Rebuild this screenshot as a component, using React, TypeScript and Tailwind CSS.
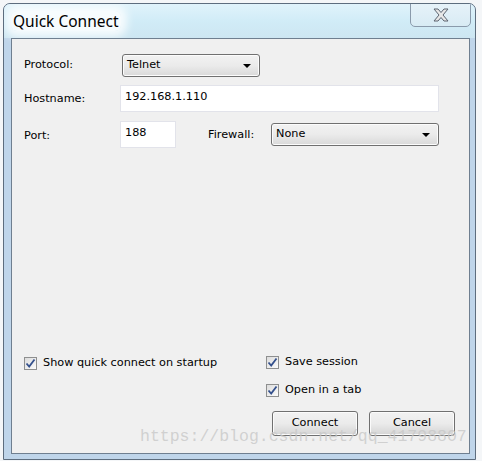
import type { ReactNode } from 'react'

const ui = "font-['DejaVu_Sans',sans-serif] text-[11.25px] text-black"

function Check({ children }: { children: ReactNode }) {
  return (
    <label className="flex items-center gap-[6px]">
      <span className="w-[13px] h-[13px] border border-[#8e8f8f] bg-gradient-to-br from-[#dcdcdc] to-[#fbfbfb] flex items-center justify-center">
        <svg width="11" height="11" viewBox="0 0 11 11">
          <path d="M1.5 5.5 L4.2 8.6 L9.5 1.5" fill="none" stroke="#34508c" strokeWidth="1.8" />
        </svg>
      </span>
      <span>{children}</span>
    </label>
  )
}

function Select({ value, width }: { value: string; width: string }) {
  return (
    <div
      className={`${width} h-[23px] rounded-[3px] border border-[#707070] bg-gradient-to-b from-[#f2f2f2] via-[#ebebeb] to-[#d9d9d9] flex items-center pl-[4px] pr-[8px] shadow-[inset_0_0_0_1px_#fcfcfc]`}
    >
      <span className="flex-1">{value}</span>
      <svg width="8" height="4" viewBox="0 0 8 4">
        <path d="M0 0 H8 L4 4 Z" fill="#000" />
      </svg>
    </div>
  )
}

function Button({ label }: { label: string }) {
  return (
    <button className="w-[86px] h-[25px] rounded-[3px] border border-[#707070] bg-gradient-to-b from-[#f2f2f2] via-[#ebebeb] to-[#d4d4d4] shadow-[inset_0_0_0_1px_#fbfbfb] flex items-center justify-center">
      {label}
    </button>
  )
}

export default function App() {
  return (
    <div className="relative w-[482px] h-[461px] bg-[#f4f6f8] pl-[3px] pt-[3px]">
      <div className="w-[473px] h-[457px] border border-[#5d6d7e] rounded-t-[7px] bg-[#bfd5ea] flex flex-col overflow-hidden">
        {/* Title bar */}
        <div className="h-[34px] shrink-0 flex items-start bg-gradient-to-b from-[#e0f3fb] via-[#d1ecf7] to-[#cde6f2]">
          <span className="ml-[7px] mt-[7px] px-[2px] font-['Noto_Sans',sans-serif] text-[15.5px] leading-[20px] text-black bg-white/80 rounded-[6px] shadow-[0_0_8px_6px_rgba(255,255,255,0.8)]">
            Quick Connect
          </span>
          <div className="ml-auto mr-[4px] -mt-px w-[61px] h-[24px] rounded-b-[5px] border border-[#8a9aab] bg-gradient-to-b from-[#e6f2f9] to-[#d8ebf4] flex items-center justify-center">
            <svg width="18" height="14" viewBox="0 0 18 14">
              <path
                d="M2 1 H6 L9 4.5 L12 1 H16 L11 7 L16 13 H12 L9 9.5 L6 13 H2 L7 7 Z"
                fill="#e8e8e8"
                stroke="#5c6470"
                strokeWidth="1"
                strokeLinejoin="round"
              />
            </svg>
          </div>
        </div>

        {/* Body */}
        <div className="flex-1 flex pl-[7px] pr-[5px] pb-[5px]">
          <div className={`flex-1 border border-[#6f7f90] bg-[#f0f0f0] flex flex-col pl-[12px] pt-[15px] pb-[17px] ${ui}`}>
            <div className="flex items-center h-[23px]">
              <span className="w-[98px]">Protocol:</span>
              <Select value="Telnet" width="w-[138px]" />
            </div>

            <div className="flex items-center h-[27px] mt-[8px]">
              <span className="w-[96px] pt-[1px]">Hostname:</span>
              <div className="w-[319px] h-[27px] border border-[#e2e3ea] bg-white px-[4px] pt-[3px]">192.168.1.110</div>
            </div>

            <div className="flex items-center h-[27px] mt-[9px]">
              <span className="w-[96px] pt-[4px]">Port:</span>
              <div className="w-[56px] h-[27px] border border-[#e2e3ea] bg-white px-[4px] pt-[3px]">188</div>
              <span className="ml-[32px] w-[63px] pt-[1px]">Firewall:</span>
              <Select value="None" width="w-[168px]" />
            </div>

            <div className="flex-1" />

            <div className="flex h-[14px]">
              <div className="w-[242px]">
                <Check>Show quick connect on startup</Check>
              </div>
              <Check>Save session</Check>
            </div>
            <div className="flex h-[14px] mt-[14px] pl-[242px]">
              <Check>Open in a tab</Check>
            </div>
            <div className="flex gap-[11px] mt-[14px] pl-[248px]">
              <Button label="Connect" />
              <Button label="Cancel" />
            </div>
          </div>
        </div>
      </div>

      {/* csdn watermark */}
      <div className="absolute left-[140px] top-[427px] font-['Liberation_Mono',monospace] text-[16.5px] leading-[20px] text-[#c8c8c8]/80 pointer-events-none">
        https://blog.csdn.net/qq_41798807
      </div>
    </div>
  )
}
